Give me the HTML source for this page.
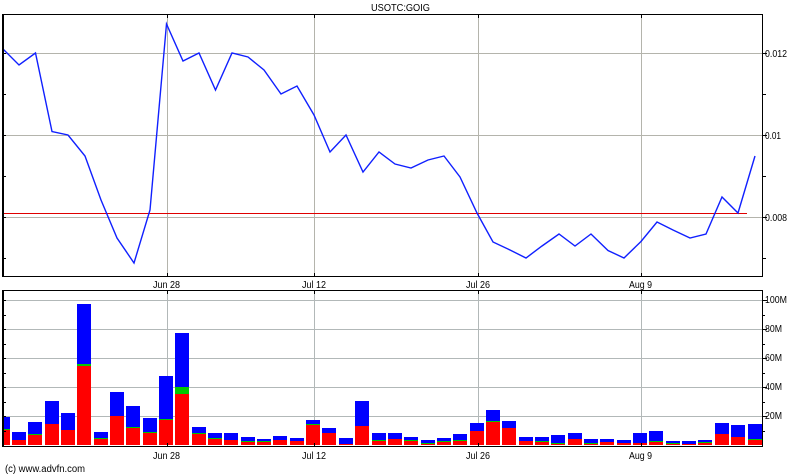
<!DOCTYPE html>
<html>
<head>
<meta charset="utf-8">
<style>
html,body{margin:0;padding:0;background:#fff;width:800px;height:475px;overflow:hidden}
svg{display:block}
text{font-family:"Liberation Sans",Arial,sans-serif;font-size:10px;fill:#000}
</style>
</head>
<body>
<svg width="800" height="475" viewBox="0 0 800 475" xmlns="http://www.w3.org/2000/svg">
<rect width="800" height="475" fill="#fff"/>
<g shape-rendering="crispEdges" fill="none">
<path stroke="#b4b4ac" d="M3 53.5H762M3 135.5H762M3 217.5H762M167.5 15V276M314.5 15V276M478.5 15V276M641.5 15V276"/>
<path stroke="#b2b8b8" d="M3 300.5H762M3 329.5H762M3 358.5H762M3 387.5H762M3 416.5H762M167.5 291V446M314.5 291V446M478.5 291V446M641.5 291V446"/>
</g>
<path fill="#0000ff" shape-rendering="crispEdges" d="M3 417h7V445h-7zM12 432h14V445h-14zM28 422h14V445h-14zM45 401h14V445h-14zM61 413h14V445h-14zM77 304h14V445h-14zM94 432h14V445h-14zM110 392h14V445h-14zM126 406h14V445h-14zM143 418h14V445h-14zM159 376h14V445h-14zM175 333h14V445h-14zM192 427h14V445h-14zM208 433h14V445h-14zM224 433h14V445h-14zM241 437h14V445h-14zM257 439h14V445h-14zM273 436h14V445h-14zM290 438h14V445h-14zM306 420h14V445h-14zM322 428h14V445h-14zM339 438h14V445h-14zM355 401h14V445h-14zM372 433h14V445h-14zM388 433h14V445h-14zM404 437h14V445h-14zM421 440h14V445h-14zM437 438h14V445h-14zM453 434h14V445h-14zM470 423h14V445h-14zM486 410h14V445h-14zM502 421h14V445h-14zM519 437h14V445h-14zM535 437h14V445h-14zM551 435h14V445h-14zM568 433h14V445h-14zM584 439h14V445h-14zM600 439h14V445h-14zM617 440h14V445h-14zM633 433h14V445h-14zM649 431h14V445h-14zM666 441h14V445h-14zM682 441h14V445h-14zM698 440h14V445h-14zM715 423h14V445h-14zM731 425h14V445h-14zM748 424h14V445h-14z"/>
<path fill="#00c800" shape-rendering="crispEdges" d="M3 429h7V445h-7zM28 434h14V445h-14zM77 364h14V445h-14zM94 438h14V445h-14zM126 427h14V445h-14zM143 432h14V445h-14zM159 419h14V445h-14zM175 387h14V445h-14zM192 433h14V445h-14zM208 438h14V445h-14zM241 441h14V445h-14zM257 441h14V445h-14zM306 424h14V445h-14zM372 440h14V445h-14zM404 440h14V445h-14zM421 443h14V445h-14zM437 441h14V445h-14zM453 440h14V445h-14zM486 421h14V445h-14zM535 441h14V445h-14zM551 443h14V445h-14zM584 443h14V445h-14zM649 441h14V445h-14zM666 443h14V445h-14zM698 442h14V445h-14zM748 439h14V445h-14z"/>
<path fill="#ff0000" shape-rendering="crispEdges" d="M3 430h7V445h-7zM12 440h14V445h-14zM28 435h14V445h-14zM45 424h14V445h-14zM61 430h14V445h-14zM77 366h14V445h-14zM94 439h14V445h-14zM110 416h14V445h-14zM126 428h14V445h-14zM143 433h14V445h-14zM159 420h14V445h-14zM175 394h14V445h-14zM192 434h14V445h-14zM208 439h14V445h-14zM224 440h14V445h-14zM241 442h14V445h-14zM257 442h14V445h-14zM273 440h14V445h-14zM290 441h14V445h-14zM306 425h14V445h-14zM322 433h14V445h-14zM339 444h14V445h-14zM355 426h14V445h-14zM372 441h14V445h-14zM388 439h14V445h-14zM404 441h14V445h-14zM421 444h14V445h-14zM437 442h14V445h-14zM453 441h14V445h-14zM470 431h14V445h-14zM486 422h14V445h-14zM502 428h14V445h-14zM519 441h14V445h-14zM535 442h14V445h-14zM551 444h14V445h-14zM568 439h14V445h-14zM584 444h14V445h-14zM600 442h14V445h-14zM617 443h14V445h-14zM633 443h14V445h-14zM649 442h14V445h-14zM666 444h14V445h-14zM682 444h14V445h-14zM698 443h14V445h-14zM715 434h14V445h-14zM731 437h14V445h-14zM748 440h14V445h-14z"/>
<path stroke="#e00000" stroke-width="1" fill="none" shape-rendering="crispEdges" d="M3 213.5H747"/>
<polyline fill="none" stroke="#1020ff" stroke-width="1.4" stroke-linejoin="miter" points="3,49 19,65 35.5,53 52,131.5 68,135 85,156 101,200 117,238 134,263 150,210 166.5,24 183,61 199,53 215.5,90 232,53 248,57 264,70 281,94 297,86 314,115 330,152 346,135 363,172 379,152 395,164 411,168 428,160 444,156 460,177 477,213 493,242 510,250 526,258 542,246 559,234 575,246 591,234 608,250.5 624,258 641,241.5 657,222 673,230 690,238 706,234 722,197 738,213 755,156"/>
<g fill="none" stroke="#000" shape-rendering="crispEdges">
<path d="M2.5 14.5H762.5V276.5H2.5ZM3.5 15V276"/>
<path d="M2.5 290.5H762.5V446.5H2.5ZM3.5 291V446"/>
<path d="M763 53.5h4M763 94.5h3M763 135.5h4M763 176.5h3M763 217.5h4M763 258.5h3"/>
<path d="M4 53.5h2M4 94.5h2M4 135.5h2M4 176.5h2M4 217.5h2M4 258.5h2"/>
<path d="M167.5 15v3M314.5 15v3M478.5 15v3M641.5 15v3M167.5 273v3M314.5 273v3M478.5 273v3M641.5 273v3"/>
<path d="M763 300.5h4M763 315.5h2M763 329.5h4M763 344.5h2M763 358.5h4M763 373.5h2M763 387.5h4M763 402.5h2M763 416.5h4M763 431.5h2"/>
<path d="M4 300.5h2M4 315.5h2M4 329.5h2M4 344.5h2M4 358.5h2M4 373.5h2M4 387.5h2M4 402.5h2M4 416.5h2M4 431.5h2"/>
<path d="M167.5 291v3M314.5 291v3M478.5 291v3M641.5 291v3M167.5 443v3M314.5 443v3M478.5 443v3M641.5 443v3"/>
</g>
<text x="371" y="11" textLength="59" lengthAdjust="spacingAndGlyphs">USOTC:GOIG</text>
<text x="765" y="57" textLength="22" lengthAdjust="spacingAndGlyphs">0.012</text>
<text x="765" y="139" textLength="16" lengthAdjust="spacingAndGlyphs">0.01</text>
<text x="765" y="221" textLength="22" lengthAdjust="spacingAndGlyphs">0.008</text>
<text x="153" y="288" textLength="27" lengthAdjust="spacingAndGlyphs">Jun 28</text>
<text x="302" y="288" textLength="24" lengthAdjust="spacingAndGlyphs">Jul 12</text>
<text x="466" y="288" textLength="24" lengthAdjust="spacingAndGlyphs">Jul 26</text>
<text x="629" y="288" textLength="23" lengthAdjust="spacingAndGlyphs">Aug 9</text>
<text x="153" y="459" textLength="27" lengthAdjust="spacingAndGlyphs">Jun 28</text>
<text x="302" y="459" textLength="24" lengthAdjust="spacingAndGlyphs">Jul 12</text>
<text x="466" y="459" textLength="24" lengthAdjust="spacingAndGlyphs">Jul 26</text>
<text x="629" y="459" textLength="23" lengthAdjust="spacingAndGlyphs">Aug 9</text>
<text x="765" y="303" textLength="22" lengthAdjust="spacingAndGlyphs">100M</text>
<text x="765" y="332" textLength="17" lengthAdjust="spacingAndGlyphs">80M</text>
<text x="765" y="361" textLength="17" lengthAdjust="spacingAndGlyphs">60M</text>
<text x="765" y="390" textLength="17" lengthAdjust="spacingAndGlyphs">40M</text>
<text x="765" y="419" textLength="17" lengthAdjust="spacingAndGlyphs">20M</text>
<text x="5" y="472" textLength="80" lengthAdjust="spacingAndGlyphs">(c) www.advfn.com</text>
</svg>
</body>
</html>
